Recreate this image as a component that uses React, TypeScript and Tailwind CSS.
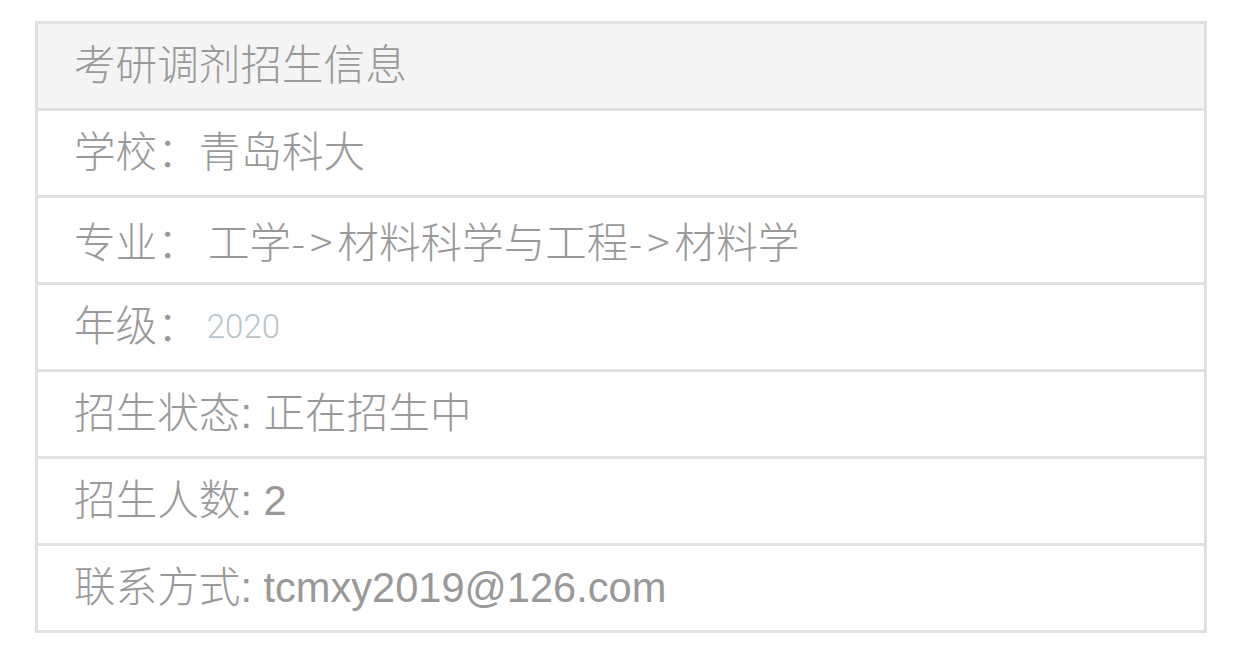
const Arrow = () => <span className="tracking-[5px]">-&gt;</span>;

const rows: { label: string; value: React.ReactNode; cjk?: boolean }[] = [
  { label: "学校：", value: "青岛科大" },
  {
    label: "专业：",
    value: (
      <span>
        {" 工学"}
        <Arrow />
        材料科学与工程
        <Arrow />
        材料学
      </span>
    ),
    cjk: true,
  },
  {
    label: "年级：",
    value: (
      <span className="ml-[8px] font-['Roboto',sans-serif] text-[33px] text-[#b8c4cc]">
        2020
      </span>
    ),
  },
  { label: "招生状态: ", value: "正在招生中" },
  { label: "招生人数: ", value: "2" },
  { label: "联系方式: ", value: "tcmxy2019@126.com" },
];

export default function App() {
  return (
    <div className="min-h-[654px] bg-white pt-[21px] pl-[35px] font-['Liberation_Sans','Noto_Sans_CJK_SC',sans-serif]">
      <div className="w-[1172px] border-[3px] border-[#e0e0e0]">
        <div className="flex h-[84px] items-center bg-[#f4f4f4] pl-[36px] text-[41.6px] font-light text-[#999999]">
          考研调剂招生信息
        </div>
        {rows.map((row) => (
          <div
            key={row.label}
            className={
              row.cjk
                ? "flex h-[87px] items-center border-t-[3px] border-[#e0e0e0] pl-[36px] font-['Noto_Sans_CJK_SC',sans-serif] text-[41.6px] font-light text-[#999999] whitespace-pre"
                : "flex h-[87px] items-center border-t-[3px] border-[#e0e0e0] pl-[36px] text-[41.6px] font-light text-[#999999] whitespace-pre"
            }
          >
            <span>{row.label}</span>
            {row.value}
          </div>
        ))}
      </div>
    </div>
  );
}
